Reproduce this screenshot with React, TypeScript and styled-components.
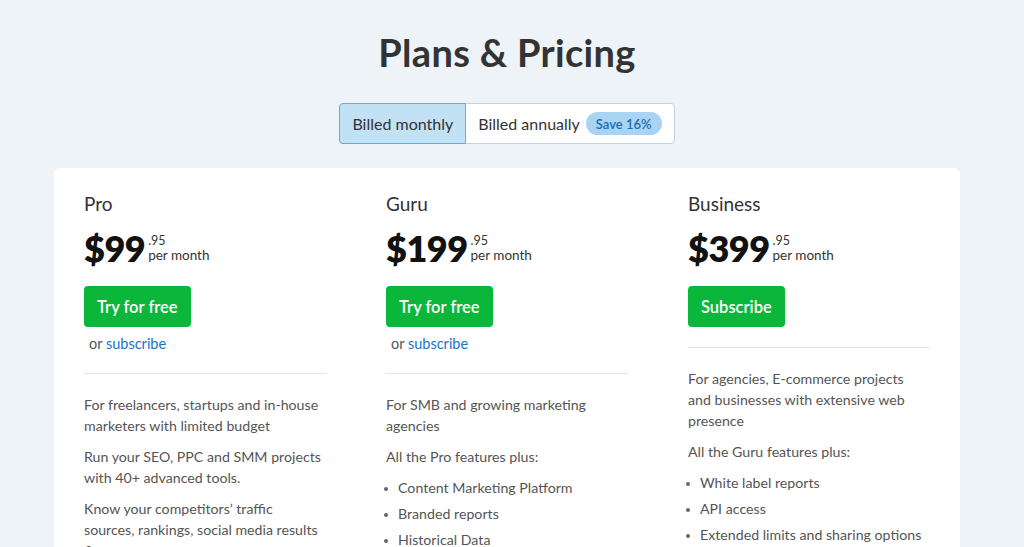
import React from "react";
import styled, { createGlobalStyle } from "styled-components";

const Global = createGlobalStyle`
  html, body { margin: 0; padding: 0; background: #eef3f7; }
  body { font-family: "Lato", "Open Sans", sans-serif; color: #333; }
  * { box-sizing: border-box; }
`;

const Page = styled.div`
  width: 1014px;
  height: 547px;
  overflow: hidden;
  display: flex;
  flex-direction: column;
  align-items: center;
  & > * { flex-shrink: 0; }
`;

const Title = styled.h1`
  margin: 29px 0 0;
  font-size: 38px;
  line-height: 46px;
  font-weight: 700;
  color: #333;
  letter-spacing: 0.3px;
`;

const Toggle = styled.div`
  margin-top: 28px;
  display: flex;
  height: 41px;
  border: 1px solid #c9d0d6;
  border-radius: 4px;
  background: #fff;
`;

const Seg = styled.button<{ $active?: boolean }>`
  display: flex;
  align-items: center;
  gap: 6px;
  height: calc(100% + 2px);
  margin: -1px 0 -1px ${(p) => (p.$active ? "-1px" : "0")};
  padding: 0 12px;
  font-family: inherit;
  font-size: 16px;
  color: #333;
  background: ${(p) => (p.$active ? "#c3e1f5" : "transparent")};
  border: ${(p) => (p.$active ? "1px solid #5eaee6" : "none")};
  border-radius: ${(p) => (p.$active ? "4px 0 0 4px" : "0 4px 4px 0")};
  cursor: pointer;
`;

const Badge = styled.span`
  display: inline-flex;
  align-items: center;
  height: 23px;
  padding: 0 10px;
  border-radius: 12px;
  background: #a9d3f2;
  color: #1a6cb4;
  font-size: 13px;
  font-weight: 600;
`;

const Card = styled.div`
  margin-top: 24px;
  width: 906px;
  flex: 1 0 auto;
  background: #fff;
  border-radius: 6px 6px 0 0;
  padding: 24px 30px 0;
  display: grid;
  grid-template-columns: repeat(3, 242px);
  column-gap: 60px;
`;

const Col = styled.div`
  display: flex;
  flex-direction: column;
`;

const PlanName = styled.div`
  font-size: 19px;
  line-height: 24px;
  color: #333;
`;

const PriceRow = styled.div`
  margin-top: 12px;
  display: flex;
  align-items: center;
  gap: 3px;
`;

const Amount = styled.span`
  font-size: 36px;
  font-weight: 800;
  line-height: 40px;
  color: #111;
  letter-spacing: -0.5px;
`;

const PriceSide = styled.div`
  display: flex;
  flex-direction: column;
  font-size: 13.5px;
  line-height: 15px;
  color: #333;
  span:first-child { font-size: 12.5px; }
`;

const Button = styled.button`
  align-self: flex-start;
  margin-top: 18px;
  height: 41px;
  padding: 0 13px;
  background: #0ab73a;
  border: none;
  border-radius: 4px;
  color: #fff;
  font-family: inherit;
  font-size: 16.5px;
  font-weight: 600;
  cursor: pointer;
`;

const OrLine = styled.div`
  margin-top: 8px;
  padding-left: 5px;
  font-size: 14.5px;
  line-height: 18px;
  color: #555;
  a { color: #1a72c6; text-decoration: none; }
`;

const Divider = styled.hr`
  margin: 20px 0 0;
  border: none;
  border-top: 1px solid #e3e5e8;
`;

const Body = styled.div`
  margin-top: 20px;
  font-size: 14.2px;
  line-height: 21px;
  color: #555;
`;

const P = styled.p`
  margin: 0 0 10px;
`;

const List = styled.ul`
  margin: 0;
  padding: 0 0 0 12px;
  list-style: none;
  li {
    position: relative;
    line-height: 21px;
    margin-bottom: 5px;
  }
  li::before {
    content: "";
    position: absolute;
    left: -14px;
    top: 10px;
    width: 4px;
    height: 4px;
    border-radius: 50%;
    background: #666;
  }
`;

type Plan = {
  name: string;
  amount: string;
  button: string;
  or?: boolean;
  paras: string[];
  list?: string[];
};

const plans: Plan[] = [
  {
    name: "Pro",
    amount: "$99",
    button: "Try for free",
    or: true,
    paras: [
      "For freelancers, startups and in-house marketers with limited budget",
      "Run your SEO, PPC and SMM projects with 40+ advanced tools.",
      "Know your competitors’ traffic sources, rankings, social media results & more.",
    ],
  },
  {
    name: "Guru",
    amount: "$199",
    button: "Try for free",
    or: true,
    paras: ["For SMB and growing marketing agencies", "All the Pro features plus:"],
    list: ["Content Marketing Platform", "Branded reports", "Historical Data"],
  },
  {
    name: "Business",
    amount: "$399",
    button: "Subscribe",
    paras: [
      "For agencies, E-commerce projects and businesses with extensive web presence",
      "All the Guru features plus:",
    ],
    list: ["White label reports", "API access", "Extended limits and sharing options"],
  },
];

export default function App() {
  return (
    <>
      <Global />
      <Page>
        <Title>Plans &amp; Pricing</Title>
        <Toggle>
          <Seg $active>Billed monthly</Seg>
          <Seg>
            Billed annually <Badge>Save 16%</Badge>
          </Seg>
        </Toggle>
        <Card>
          {plans.map((p) => (
            <Col key={p.name}>
              <PlanName>{p.name}</PlanName>
              <PriceRow>
                <Amount>{p.amount}</Amount>
                <PriceSide>
                  <span>.95</span>
                  <span>per month</span>
                </PriceSide>
              </PriceRow>
              <Button>{p.button}</Button>
              {p.or && (
                <OrLine>
                  or <a href="#">subscribe</a>
                </OrLine>
              )}
              <Divider />
              <Body>
                {p.paras.map((t) => (
                  <P key={t}>{t}</P>
                ))}
                {p.list && (
                  <List>
                    {p.list.map((t) => (
                      <li key={t}>{t}</li>
                    ))}
                  </List>
                )}
              </Body>
            </Col>
          ))}
        </Card>
      </Page>
    </>
  );
}
